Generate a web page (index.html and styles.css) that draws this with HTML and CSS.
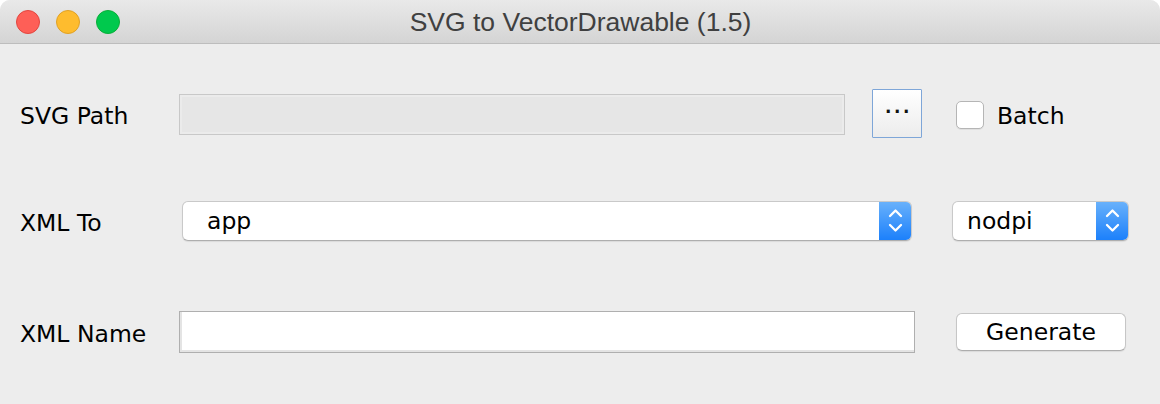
FILE: index.html
```html
<!DOCTYPE html>
<html>
<head>
<meta charset="utf-8">
<link rel="stylesheet" href="styles.css">
</head>
<body>
<div class="window">
  <div class="titlebar">
    <div class="lights">
      <span class="light red"></span>
      <span class="light yellow"></span>
      <span class="light green"></span>
    </div>
    <div class="title">SVG to VectorDrawable (1.5)</div>
  </div>
  <div class="content">
    <div class="row row1">
      <div class="label l1">SVG Path</div>
      <div class="field disabled"></div>
      <button class="dots">···</button>
      <span class="checkbox"></span>
      <span class="check-label">Batch</span>
    </div>
    <div class="row row2">
      <div class="label l2">XML To</div>
      <div class="combo combo-app">
        <span class="combo-text">app</span>
        <span class="combo-arrow">
          <svg width="33" height="40" viewBox="0 0 33 40"><polyline points="11,15 16.5,9.5 22,15" fill="none" stroke="#fff" stroke-width="2.3" stroke-linecap="round" stroke-linejoin="round"/><polyline points="11,24 16.5,29.5 22,24" fill="none" stroke="#fff" stroke-width="2.3" stroke-linecap="round" stroke-linejoin="round"/></svg>
        </span>
      </div>
      <div class="combo combo-dpi">
        <span class="combo-text">nodpi</span>
        <span class="combo-arrow">
          <svg width="33" height="40" viewBox="0 0 33 40"><polyline points="11,15 16.5,9.5 22,15" fill="none" stroke="#fff" stroke-width="2.3" stroke-linecap="round" stroke-linejoin="round"/><polyline points="11,24 16.5,29.5 22,24" fill="none" stroke="#fff" stroke-width="2.3" stroke-linecap="round" stroke-linejoin="round"/></svg>
        </span>
      </div>
    </div>
    <div class="row row3">
      <div class="label l3">XML Name</div>
      <div class="field name"></div>
      <button class="generate">Generate</button>
    </div>
  </div>
</div>
</body>
</html>
```
FILE: styles.css
```css
html, body {
  margin: 0;
  padding: 0;
  background: #ffffff;
}
body {
  width: 1160px;
  height: 404px;
  overflow: hidden;
  font-family: "DejaVu Sans", "Liberation Sans", sans-serif;
}
.window {
  width: 1160px;
  height: 404px;
  background: #ededed;
  border-radius: 10px 10px 0 0;
  overflow: hidden;
}
.titlebar {
  height: 43px;
  border-bottom: 1px solid #bdbdbd;
  background: linear-gradient(#e9e9e9, #d4d4d4);
  display: flex;
  align-items: center;
  position: relative;
}
.lights {
  display: flex;
  gap: 16px;
  padding-left: 16px;
}
.light {
  width: 22px;
  height: 22px;
  border-radius: 50%;
  display: block;
}
.red { background: #fe5f57; border: 1px solid #e2463f; }
.yellow { background: #febc2e; border: 1px solid #e0a125; }
.green { background: #00c94d; border: 1px solid #0aae39; }
.title {
  position: absolute;
  left: 0;
  right: 0;
  top: 1px;
  line-height: 43px;
  text-align: center;
  font-family: "Liberation Sans", Arial, sans-serif;
  font-size: 26.5px;
  color: #404040;
  padding-left: 1px;
}
.content {
  display: flex;
  flex-direction: column;
}
.row {
  display: flex;
  align-items: center;
}
.row1 { margin-top: 44px; height: 50px; }
.row2 { margin-top: 63px; height: 40px; }
.row3 { margin-top: 70px; height: 42px; }
.label {
  box-sizing: border-box;
  padding-left: 20px;
  font-size: 23.5px;
  color: #000;
  flex: none;
}
.l1 { width: 179px; padding-top: 5px; }
.l2 { width: 182px; padding-top: 3px; }
.l3 { width: 179px; padding-top: 3px; }
.field {
  box-sizing: border-box;
  flex: none;
}
.field.disabled {
  width: 666px;
  height: 41px;
  margin-top: 2px;
  border: 1px solid #c8c8c8;
  background: #e6e6e6;
  box-shadow: inset 0 0 0 2px #ebebeb;
}
.dots {
  box-sizing: border-box;
  margin-left: 27px;
  width: 50px;
  height: 49px;
  border: 1px solid #7ea6d8;
  border-radius: 1px;
  background: linear-gradient(#ffffff, #ececec);
  font-family: "DejaVu Sans", sans-serif;
  font-size: 17px;
  font-weight: bold;
  letter-spacing: 2.5px;
  color: #111;
  padding: 0 0 2px 3px;
  flex: none;
}
.checkbox {
  box-sizing: border-box;
  margin-left: 34px;
  margin-top: 3px;
  width: 28px;
  height: 28px;
  border: 1px solid #b5b5b5;
  border-radius: 5px;
  background: #fff;
  box-shadow: 0 1px 0 rgba(0,0,0,0.06);
  flex: none;
}
.check-label {
  margin-left: 13px;
  padding-top: 5px;
  font-size: 23.5px;
  color: #000;
}
.combo {
  box-sizing: border-box;
  height: 40px;
  display: flex;
  align-items: center;
  background: #fff;
  border: 1px solid #c9c9c9;
  border-bottom-color: #aeaeae;
  border-radius: 6px;
  box-shadow: 0 1px 1px rgba(0,0,0,0.08);
  flex: none;
  overflow: hidden;
}
.combo-app { width: 730px; }
.combo-dpi { width: 177px; margin-left: 40px; }
.combo-text {
  flex: 1;
  font-size: 23.5px;
  color: #000;
}
.combo-app .combo-text { padding-left: 24px; }
.combo-dpi .combo-text { padding-left: 14px; }
.combo-arrow {
  width: 33px;
  height: 40px;
  margin-top: -1px;
  margin-bottom: -1px;
  margin-right: -1px;
  background: linear-gradient(#6ab2fb, #1a7ffb);
  display: flex;
  align-items: center;
  justify-content: center;
  flex: none;
}
.combo-arrow svg { display: block; }
.field.name {
  width: 736px;
  height: 42px;
  border: 1px solid #afafaf;
  background: #fff;
  box-shadow: inset 2px -2px 0 #e4e4e4;
}
.generate {
  box-sizing: border-box;
  margin-left: 41px;
  width: 170px;
  height: 38px;
  border: 1px solid #c6c6c6;
  border-bottom-color: #adadad;
  border-radius: 6px;
  background: #fff;
  box-shadow: 0 1px 1px rgba(0,0,0,0.08);
  font-family: "DejaVu Sans", sans-serif;
  font-size: 23.5px;
  color: #000;
  padding: 0;
  flex: none;
}
```
